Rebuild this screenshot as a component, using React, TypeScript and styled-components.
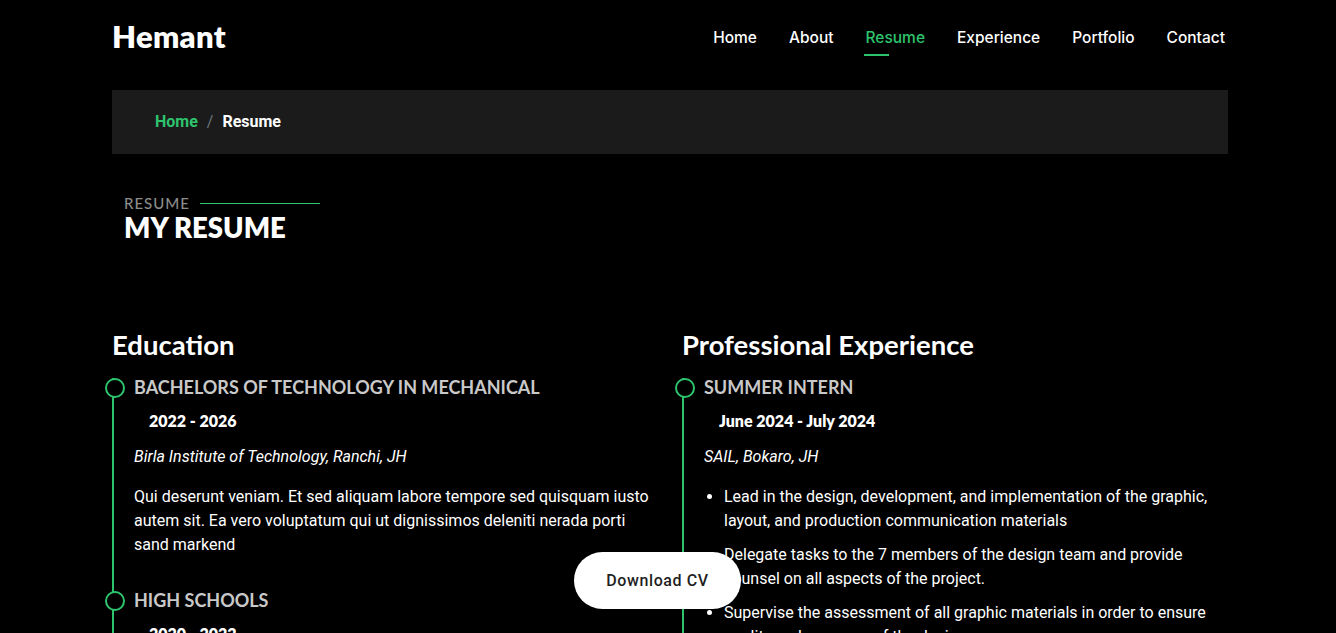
import React from "react";
import styled, { createGlobalStyle } from "styled-components";

const GREEN = "#2ec46e";

const Global = createGlobalStyle`
  * { box-sizing: border-box; }
  html, body { margin: 0; padding: 0; background: #000; }
  body {
    font-family: Roboto, "Open Sans", sans-serif;
    color: #fff;
    font-size: 16px;
  }
`;

const Container = styled.div`
  width: 1120px;
  margin: 0 auto;
  padding-left: 4px;
`;

const Header = styled.header`
  height: 74px;
  display: flex;
  align-items: center;
  justify-content: space-between;
`;

const Logo = styled.h1`
  margin: 0 0 2px;
  font-family: Lato, "Open Sans", sans-serif;
  font-size: 31px;
  font-weight: 800;
  color: #fff;
  letter-spacing: 0.3px;
`;

const Nav = styled.nav`
  display: flex;
  align-items: center;
  gap: 32px;
  margin-right: 3px;
`;

const NavLink = styled.a<{ $active?: boolean }>`
  position: relative;
  font-family: Inter, "Open Sans", sans-serif;
  font-size: 15.5px;
  font-weight: 500;
  color: ${(p) => (p.$active ? GREEN : "#fff")};
  text-decoration: none;
  padding: 6px 0;
  &::after {
    content: "";
    position: absolute;
    left: -2px;
    bottom: -3px;
    width: 25px;
    height: 2px;
    background: ${GREEN};
    display: ${(p) => (p.$active ? "block" : "none")};
  }
`;

const Breadcrumb = styled.div`
  margin-top: 16px;
  height: 64px;
  background: #1b1b1b;
  display: flex;
  align-items: center;
  padding: 0 43px 2px;
  font-family: Roboto, sans-serif;
  font-size: 16px;
  font-weight: 700;
`;

const Crumb = styled.span<{ $link?: boolean }>`
  color: ${(p) => (p.$link ? GREEN : "#fff")};
`;

const Sep = styled.span`
  color: #6c757d;
  font-weight: 400;
  padding: 0 9px;
`;

const SectionTitle = styled.div`
  padding: 40px 12px 0;
`;

const Kicker = styled.h2`
  margin: 0;
  display: flex;
  align-items: center;
  font-family: Lato, sans-serif;
  font-size: 15px;
  font-weight: 500;
  letter-spacing: 1px;
  color: #8c8c8c;
  text-transform: uppercase;
  line-height: 18px;
  &::after {
    content: "";
    width: 120px;
    height: 1px;
    background: ${GREEN};
    margin-left: 10px;
  }
`;

const BigTitle = styled.p`
  margin: 0;
  font-family: Lato, sans-serif;
  font-size: 27.5px;
  font-weight: 800;
  line-height: 32px;
  color: #fff;
  text-transform: uppercase;
`;

const Row = styled.div`
  display: grid;
  grid-template-columns: 546px 546px;
  column-gap: 24px;
  margin-top: 85px;
`;

const Column = styled.div``;

const ColTitle = styled.h3`
  margin: 0 0 19px;
  font-family: Lato, sans-serif;
  font-size: 27.5px;
  font-weight: 700;
  line-height: 32px;
  color: #fff;
`;

const Item = styled.div`
  position: relative;
  padding: 0 0 20px 20px;
  margin-top: -2px;
  border-left: 2px solid ${GREEN};
  &::before {
    content: "";
    position: absolute;
    width: 16px;
    height: 16px;
    border-radius: 50%;
    left: -9px;
    top: 0;
    background: #000;
    border: 2px solid ${GREEN};
  }
`;

const ItemTitle = styled.h4`
  margin: 0 0 10px;
  font-family: Lato, sans-serif;
  font-size: 18px;
  line-height: 18px;
  font-weight: 700;
  text-transform: uppercase;
  color: #c9c9c9;
`;

const Period = styled.h5`
  display: inline-block;
  margin: 0 0 10px;
  padding: 5px 15px;
  font-family: Lato, sans-serif;
  font-size: 16px;
  line-height: 19px;
  font-weight: 800;
  color: #fff;
`;

const Place = styled.p`
  margin: 0 0 16px;
  font-style: italic;
  line-height: 24px;
`;

const Body = styled.p`
  margin: 0 0 16px;
  line-height: 24px;
`;

const List = styled.ul`
  margin: 0 0 16px;
  padding-left: 20px;
`;

const Li = styled.li`
  padding-bottom: 10px;
  line-height: 24px;
`;

const Spacer = styled.div`
  height: 200px;
`;

const DownloadButton = styled.a`
  position: fixed;
  left: 574px;
  bottom: 24px;
  width: 167px;
  height: 57px;
  border-radius: 30px;
  background: #fff;
  color: #1f1f1f;
  display: flex;
  align-items: center;
  justify-content: center;
  font-family: Roboto, sans-serif;
  font-size: 16px;
  font-weight: 500;
  letter-spacing: 0.6px;
  text-decoration: none;
  z-index: 10;
`;

export default function App() {
  return (
    <>
      <Global />
      <Container>
        <Header>
          <Logo>Hemant</Logo>
          <Nav>
            <NavLink href="#">Home</NavLink>
            <NavLink href="#">About</NavLink>
            <NavLink href="#" $active>
              Resume
            </NavLink>
            <NavLink href="#">Experience</NavLink>
            <NavLink href="#">Portfolio</NavLink>
            <NavLink href="#">Contact</NavLink>
          </Nav>
        </Header>

        <Breadcrumb>
          <Crumb $link>Home</Crumb>
          <Sep>/</Sep>
          <Crumb>Resume</Crumb>
        </Breadcrumb>

        <SectionTitle>
          <Kicker>Resume</Kicker>
          <BigTitle>My Resume</BigTitle>
        </SectionTitle>

        <Row>
          <Column>
            <ColTitle>Education</ColTitle>
            <Item>
              <ItemTitle>Bachelors of Technology in Mechanical</ItemTitle>
              <Period>2022 - 2026</Period>
              <Place>Birla Institute of Technology, Ranchi, JH</Place>
              <Body>
                Qui deserunt veniam. Et sed aliquam labore tempore sed quisquam iusto autem sit. Ea
                vero voluptatum qui ut dignissimos deleniti nerada porti sand markend
              </Body>
            </Item>
            <Item>
              <ItemTitle>High Schools</ItemTitle>
              <Period>2020 - 2022</Period>
              <Place>Delhi Public School, Bokaro, JH</Place>
              <Body>
                Quia nobis sequi est occaecati aut. Repudiandae et iusto quae reiciendis et quis
                Eius vel ratione eius unde vitae rerum voluptates asperiores voluptatem Earum
                molestiae consequatur neque etlon sader mart dila
              </Body>
            </Item>
          </Column>
          <Column>
            <ColTitle>Professional Experience</ColTitle>
            <Item>
              <ItemTitle>Summer Intern</ItemTitle>
              <Period>June 2024 - July 2024</Period>
              <Place>SAIL, Bokaro, JH</Place>
              <List>
                <Li>
                  Lead in the design, development, and implementation of the graphic, layout, and
                  production communication materials
                </Li>
                <Li>
                  Delegate tasks to the 7 members of the design team and provide counsel on all
                  aspects of the project.
                </Li>
                <Li>
                  Supervise the assessment of all graphic materials in order to ensure quality and
                  accuracy of the design
                </Li>
              </List>
            </Item>
          </Column>
        </Row>
        <Spacer />
      </Container>
      <DownloadButton href="#">Download CV</DownloadButton>
    </>
  );
}
